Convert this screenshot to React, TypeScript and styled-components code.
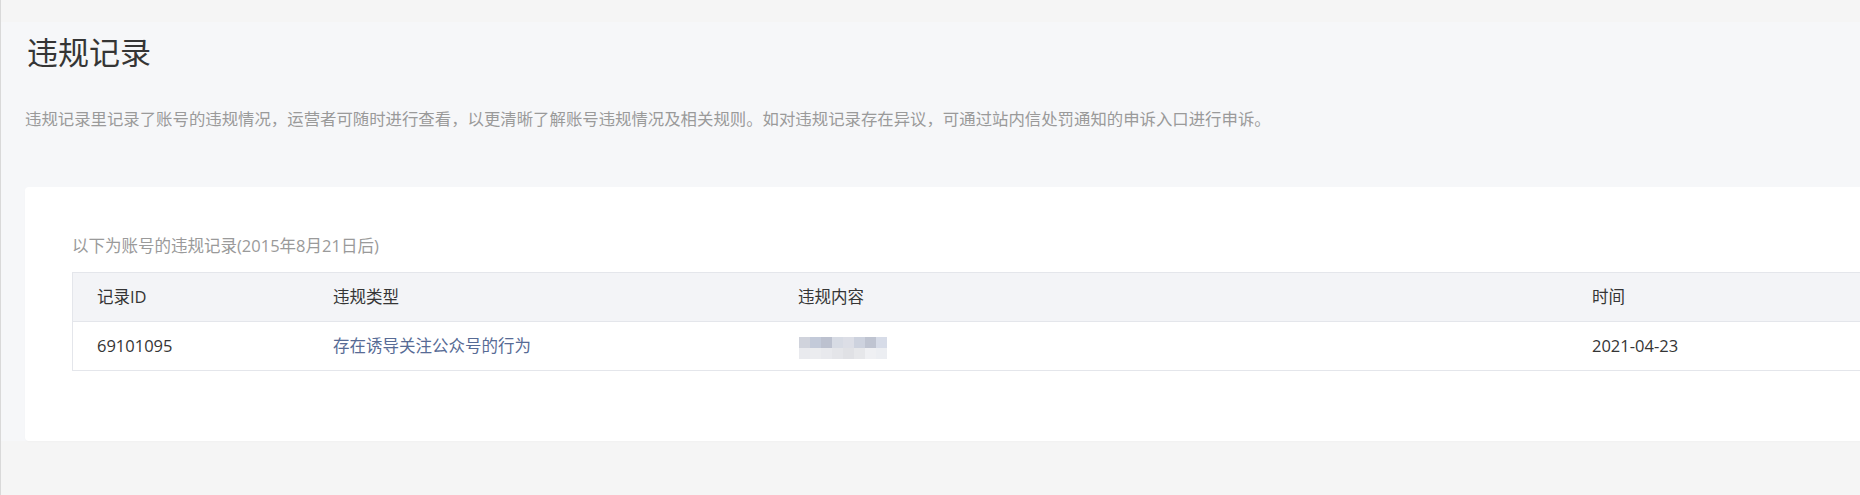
import styled, { createGlobalStyle } from "styled-components";

const GlobalStyle = createGlobalStyle`
  html, body {
    margin: 0;
    padding: 0;
    background: #f5f5f5;
    overflow: hidden;
    font-family: "Open Sans", "Noto Sans CJK SC", sans-serif;
  }
`;

const Frame = styled.div`
  min-height: 495px;
  border-left: 1px solid #d9d9d9;
  padding-top: 22px;
  box-sizing: border-box;
`;

const Main = styled.main`
  width: 2100px;
  background: #f6f7f9;
  padding: 10px 0 0 24px;
`;

const Title = styled.h1`
  margin: 0;
  padding-left: 2px;
  font-size: 31px;
  line-height: 40px;
  font-weight: 400;
  color: #353535;
`;

const Desc = styled.p`
  margin: 35px 0 0;
  font-size: 16.4px;
  line-height: 24px;
  color: #9a9a9a;
`;

const Card = styled.section`
  margin-top: 56px;
  background: #fff;
  border-radius: 4px;
  padding: 47px 47px 70px;
  box-shadow: 0 1px 2px rgba(0, 0, 0, 0.02);
`;

const Caption = styled.div`
  font-size: 16.5px;
  line-height: 24px;
  color: #9a9a9a;
`;

const Table = styled.div`
  margin-top: 14px;
  border: 1px solid #e4e6eb;
  font-size: 16.5px;
  color: #353535;
`;

const Row = styled.div<{ $head?: boolean }>`
  display: grid;
  grid-template-columns: 236px 465px 794px 1fr;
  height: 48px;
  align-items: center;
  background: ${({ $head }) => ($head ? "#f3f4f7" : "#fff")};
  border-top: ${({ $head }) => ($head ? "none" : "1px solid #e4e6eb")};
`;

const Cell = styled.div<{ $link?: boolean }>`
  padding-left: 24px;
  line-height: 24px;
  color: ${({ $link }) => ($link ? "#576b95" : "#353535")};
  display: flex;
  align-items: center;
`;

// blurred placeholder for the hidden content
const mosaicTop = ["#d0d3dc", "#c3cad9", "#bcc1cf", "#d7dbe4", "#dcdee6", "#cdd2de", "#bfc4d1", "#d7dce8"];
const mosaicBottom = ["#e9eaee", "#ebecef", "#e8e9ed", "#e4e5e9", "#e0e1e5", "#e6e7ea", "#eff0f3", "#eceef2"];

const Mosaic = () => (
  <svg width="90" height="22" viewBox="0 0 88 22" style={{ marginTop: 3 }}>
    {mosaicTop.map((c, i) => (
      <rect key={"t" + i} x={i * 11} y={0} width={11} height={11} fill={c} />
    ))}
    {mosaicBottom.map((c, i) => (
      <rect key={"b" + i} x={i * 11} y={11} width={11} height={11} fill={c} />
    ))}
  </svg>
);

const records = [
  { id: "69101095", type: "存在诱导关注公众号的行为", time: "2021-04-23" },
];

export default function App() {
  return (
    <>
      <GlobalStyle />
      <Frame>
        <Main>
          <Title>违规记录</Title>
          <Desc>
            违规记录里记录了账号的违规情况，运营者可随时进行查看，以更清晰了解账号违规情况及相关规则。如对违规记录存在异议，可通过站内信处罚通知的申诉入口进行申诉。
          </Desc>
          <Card>
            <Caption>以下为账号的违规记录(2015年8月21日后)</Caption>
            <Table>
              <Row $head>
                <Cell>记录ID</Cell>
                <Cell>违规类型</Cell>
                <Cell>违规内容</Cell>
                <Cell>时间</Cell>
              </Row>
              {records.map((r) => (
                <Row key={r.id}>
                  <Cell>{r.id}</Cell>
                  <Cell $link>{r.type}</Cell>
                  <Cell>
                    <Mosaic />
                  </Cell>
                  <Cell>{r.time}</Cell>
                </Row>
              ))}
            </Table>
          </Card>
        </Main>
      </Frame>
    </>
  );
}
